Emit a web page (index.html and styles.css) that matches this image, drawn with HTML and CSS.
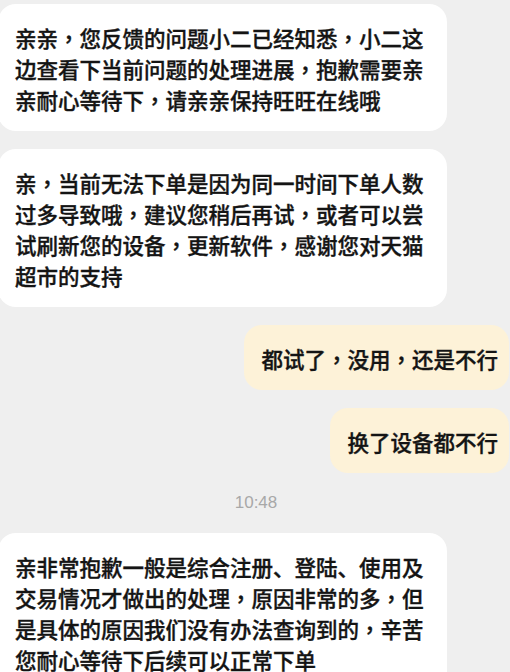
FILE: index.html
```html
<!DOCTYPE html>
<html lang="zh-CN">
<head>
<meta charset="utf-8">
<link rel="stylesheet" href="styles.css">
</head>
<body>
<div class="chat">
  <div class="bubble left">亲亲<span class="p" lang="zh-TW">，</span>您反馈的问题小二已经知悉<span class="p" lang="zh-TW">，</span>小二这边查看下当前问题的处理进展<span class="p" lang="zh-TW">，</span>抱歉需要亲亲耐心等待下<span class="p" lang="zh-TW">，</span>请亲亲保持旺旺在线哦</div>
  <div class="bubble left">亲<span class="p" lang="zh-TW">，</span>当前无法下单是因为同一时间下单人数过多导致哦<span class="p" lang="zh-TW">，</span>建议您稍后再试<span class="p" lang="zh-TW">，</span>或者可以尝试刷新您的设备<span class="p" lang="zh-TW">，</span>更新软件<span class="p" lang="zh-TW">，</span>感谢您对天猫超市的支持</div>
  <div class="bubble right">都试了<span class="p" lang="zh-TW">，</span>没用<span class="p" lang="zh-TW">，</span>还是不行</div>
  <div class="bubble right">换了设备都不行</div>
  <div class="time">10:48</div>
  <div class="bubble left">亲非常抱歉一般是综合注册、登陆、使用及交易情况才做出的处理<span class="p" lang="zh-TW">，</span>原因非常的多<span class="p" lang="zh-TW">，</span>但是具体的原因我们没有办法查询到的<span class="p" lang="zh-TW">，</span>辛苦您耐心等待下后续可以正常下单</div>
</div>
</body>
</html>
```
FILE: styles.css
```css
html, body {
  margin: 0;
  padding: 0;
  background: #efefef;
  overflow: hidden;
}
body {
  width: 510px;
  height: 672px;
  font-family: "Noto Sans CJK SC", "Noto Sans", sans-serif;
  color: #141414;
}
.chat {
  display: flex;
  flex-direction: column;
  gap: 18px;
  padding-top: 4px;
}
.bubble {
  box-sizing: border-box;
  font-size: 21.5px;
  line-height: 31px;
  font-weight: 500;
  -webkit-text-stroke: 0.35px #141414;
  border-radius: 18px;
  padding: 18px 0 16px 0;
}
.p {
  font-family: "Noto Sans CJK TC", "Noto Sans CJK SC", sans-serif;
}
.left {
  align-self: flex-start;
  width: 449px;
  margin-left: -2px;
  background: #ffffff;
  padding-left: 17px;
  padding-right: 20px;
}
.right {
  align-self: flex-end;
  margin-right: 1px;
  background: #fdf2d8;
  padding-left: 17px;
  padding-right: 11px;
}
.time {
  align-self: center;
  margin-left: 2px;
  font-family: "Liberation Sans", "Noto Sans", sans-serif;
  font-size: 17px;
  line-height: 24px;
  color: #a8a8a8;
}
```
